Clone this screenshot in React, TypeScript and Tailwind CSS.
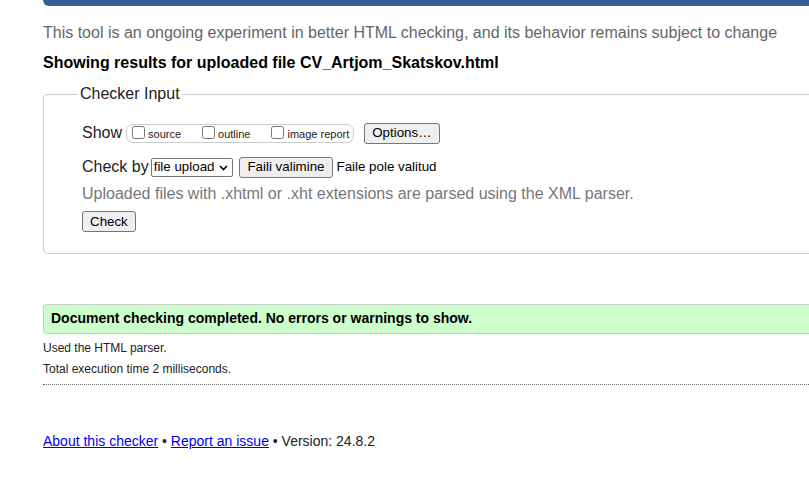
export default function App() {
  const btn =
    "bg-[#efefef] border border-[#767676] rounded-[3px] px-[7px] h-[21px] text-[13.33px] leading-none text-black";

  return (
    <div className="w-[809px] h-[490px] overflow-hidden bg-white font-['Liberation_Sans',Arial,sans-serif] text-[#222]">
      <div className="ml-[43px] h-[6px] w-[900px] bg-[#365d95] rounded-bl-[6px]" />
      <div className="pl-[43px]">
        <p className="mt-[18px] text-[16px] leading-[18px] text-[#666] whitespace-nowrap">
          This tool is an ongoing experiment in better HTML checking, and its behavior remains subject to change
        </p>
        <h2 className="mt-[12px] text-[16px] leading-[18px] font-bold text-black whitespace-nowrap">
          Showing results for uploaded file CV_Artjom_Skatskov.html
        </h2>

        <fieldset className="mt-[13px] w-[900px] border border-[#ccc] rounded-[4px] pl-[38px] pt-[19px] pb-[20px]">
          <legend className="-ml-[4px] px-[2px] text-[16px] leading-[18px] text-[#222]">Checker Input</legend>

          <div className="flex items-center h-[22px]">
            <span className="text-[16px] text-[#222] mr-[4px]">Show</span>
            <div className="flex items-center h-[19px] border border-[#ccc] rounded-[7px] pl-[2px] pr-[4px] text-[11px] text-[#222]">
              <label className="flex items-center mr-[18px]">
                <input type="checkbox" className="w-[13px] h-[13px] m-[3px] mt-[1px]" />
                <span className="mt-[2px]">source</span>
              </label>
              <label className="flex items-center mr-[18px]">
                <input type="checkbox" className="w-[13px] h-[13px] m-[3px] mt-[1px]" />
                <span className="mt-[2px]">outline</span>
              </label>
              <label className="flex items-center">
                <input type="checkbox" className="w-[13px] h-[13px] m-[3px] mt-[1px]" />
                <span className="mt-[2px]">image report</span>
              </label>
            </div>
            <button className={`${btn} ml-[10px]`}>Options…</button>
          </div>

          <div className="flex items-center h-[22px] mt-[12px]">
            <span className="text-[16px] text-[#222] mr-[2px]">Check by</span>
            <div className="relative flex items-center h-[19px] border border-[#767676] rounded-[2px] pl-[2px] pr-[18px] text-[13.33px] text-black">
              file upload
              <svg className="absolute right-[4px] top-[6px]" width="9" height="6" viewBox="0 0 9 6">
                <path d="M1 1 L4.5 4.5 L8 1" fill="none" stroke="#000" strokeWidth="1.6" />
              </svg>
            </div>
            <button className={`${btn} ml-[6px]`}>Faili valimine</button>
            <span className="ml-[4px] text-[13.33px] text-black">Faile pole valitud</span>
          </div>

          <p className="mt-[6px] text-[16px] leading-[20px] text-[#777] whitespace-nowrap">
            Uploaded files with .xhtml or .xht extensions are parsed using the XML parser.
          </p>

          <button className={`${btn} mt-[7px] h-[20px]`}>Check</button>
        </fieldset>

        <div className="mt-[50px] w-[900px] h-[30px] flex items-center bg-[#ccffcc] border border-[#ccc] rounded-[3px] pl-[7px]">
          <span className="text-[14px] font-bold text-black">
            Document checking completed. No errors or warnings to show.
          </span>
        </div>

        <p className="mt-[7px] text-[12px] leading-[14px] text-[#222]">Used the HTML parser.</p>
        <p className="mt-[7px] text-[12px] leading-[14px] text-[#222]">Total execution time 2 milliseconds.</p>
        <div className="mt-[8px] w-[900px] border-t border-dotted border-[#666]" />

        <p className="mt-[48px] text-[14px] leading-[16px] text-[#222] whitespace-nowrap">
          <a href="#" className="text-[#0000ee] underline">About this checker</a>
          {" • "}
          <a href="#" className="text-[#0000ee] underline">Report an issue</a>
          {" • Version: 24.8.2"}
        </p>
      </div>
    </div>
  );
}
